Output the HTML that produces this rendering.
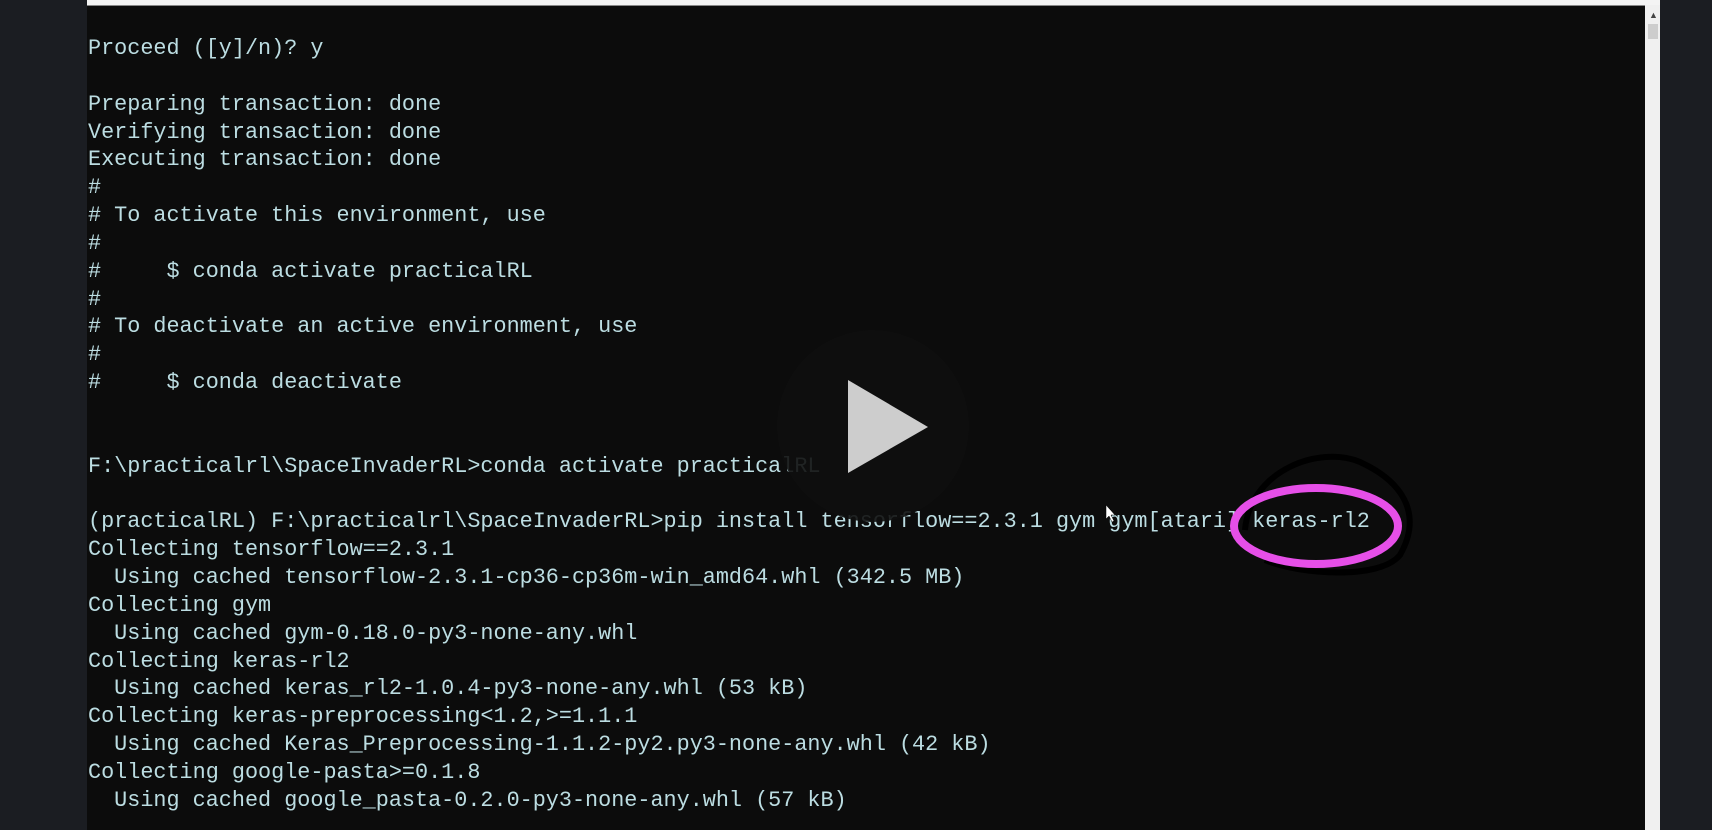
<!DOCTYPE html>
<html><head><meta charset="utf-8"><style>
html,body{margin:0;padding:0;width:1712px;height:830px;overflow:hidden;background:#1b1d22;}
#term{position:absolute;left:87px;top:0;width:1558px;height:830px;background:#0c0c0c;}
#top{position:absolute;left:87px;top:0;width:1573px;height:5px;background:#f4f4f4;border-bottom:1px solid #888;}
#sb{position:absolute;left:1645px;top:5px;width:15px;height:825px;background:#f0f0f0;}
#thumb{position:absolute;left:1648px;top:24px;width:10px;height:15px;background:#cdcdcd;}
pre{position:absolute;left:88px;top:35px;margin:0;font-family:"Liberation Mono",monospace;font-size:21.8px;line-height:27.85px;color:#bcdde2;letter-spacing:0;}
</style></head><body>
<div id="term"></div>
<div id="top"></div>
<div id="sb"></div>
<div style="position:absolute;left:1649px;top:10px;font:9px 'Liberation Sans',sans-serif;color:#444;">&#9650;</div>
<div id="thumb"></div>
<pre>Proceed ([y]/n)? y

Preparing transaction: done
Verifying transaction: done
Executing transaction: done
#
# To activate this environment, use
#
#     $ conda activate practicalRL
#
# To deactivate an active environment, use
#
#     $ conda deactivate


F:\practicalrl\SpaceInvaderRL&gt;conda activate practicalRL

(practicalRL) F:\practicalrl\SpaceInvaderRL&gt;pip install tensorflow==2.3.1 gym gym[atari] keras-rl2
Collecting tensorflow==2.3.1
  Using cached tensorflow-2.3.1-cp36-cp36m-win_amd64.whl (342.5 MB)
Collecting gym
  Using cached gym-0.18.0-py3-none-any.whl
Collecting keras-rl2
  Using cached keras_rl2-1.0.4-py3-none-any.whl (53 kB)
Collecting keras-preprocessing&lt;1.2,&gt;=1.1.1
  Using cached Keras_Preprocessing-1.1.2-py2.py3-none-any.whl (42 kB)
Collecting google-pasta&gt;=0.1.8
  Using cached google_pasta-0.2.0-py3-none-any.whl (57 kB)</pre>
<svg width="1712" height="830" style="position:absolute;left:0;top:0">
<circle cx="873" cy="426" r="96" fill="#0e0e0e" opacity="0.9"/>
<polygon points="848,380 928,427 848,473" fill="#cdcdcd"/>
<path d="M1245,530 C1250,470 1320,445 1360,462 C1410,485 1420,520 1400,555 C1380,580 1300,575 1265,560" fill="none" stroke="#000" stroke-width="6"/>
<ellipse cx="1316" cy="526" rx="82" ry="38" fill="none" stroke="#e64fe8" stroke-width="8"/>
<path d="M1106,505 l0,14 l3,-3 l3,6 l2,-1 l-3,-6 l4,0 z" fill="#fff" stroke="#000" stroke-width="0.5"/>
</svg>
</body></html>
